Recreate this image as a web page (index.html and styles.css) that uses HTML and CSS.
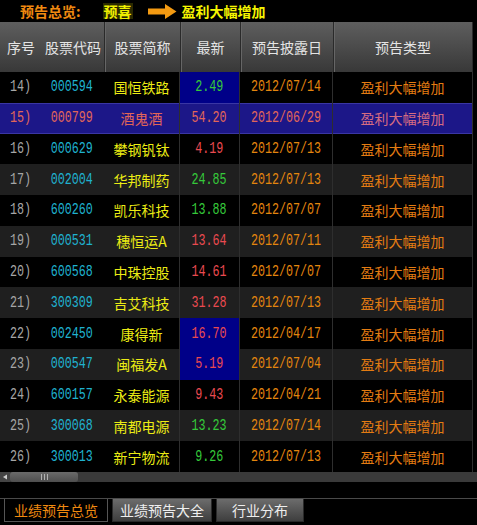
FILE: index.html
```html
<!DOCTYPE html>
<html lang="zh">
<head>
<meta charset="utf-8">
<link rel="stylesheet" href="styles.css">
</head>
<body>
<div class="app">
  <div class="titlebar">
    <span class="t-label">预告总览:</span>
    <span class="t-kind">预喜</span>
    <svg class="t-arrow" width="29" height="15" viewBox="0 0 29 15"><path d="M0 4.5 H17 V0 L28.5 7.5 L17 15 V10.5 H0 Z" fill="#f39a12"/></svg>
    <span class="t-type">盈利大幅增加</span>
  </div>

  <div class="grid">
    <div class="hrow">
      <div class="h h-seq">序号</div>
      <div class="h h-code">股票代码</div>
      <div class="h h-name sep">股票简称</div>
      <div class="h h-price sep">最新</div>
      <div class="h h-date sep">预告披露日</div>
      <div class="h h-type sep last">预告类型</div>
    </div>

    <div class="row">
      <div class="c c-seq"><span class="num">14)</span></div><div class="c c-code"><span class="num">000594</span></div><div class="c c-name">国恒铁路</div><div class="c c-price blue up"><span class="num">2.49</span></div><div class="c c-date"><span class="num">2012/07/14</span></div><div class="c c-type">盈利大幅增加</div>
    </div>
    <div class="row sel">
      <div class="c c-seq"><span class="num">15)</span></div><div class="c c-code"><span class="num">000799</span></div><div class="c c-name">酒鬼酒</div><div class="c c-price"><span class="num">54.20</span></div><div class="c c-date"><span class="num">2012/06/29</span></div><div class="c c-type">盈利大幅增加</div>
    </div>
    <div class="row">
      <div class="c c-seq"><span class="num">16)</span></div><div class="c c-code"><span class="num">000629</span></div><div class="c c-name">攀钢钒钛</div><div class="c c-price down"><span class="num">4.19</span></div><div class="c c-date"><span class="num">2012/07/13</span></div><div class="c c-type">盈利大幅增加</div>
    </div>
    <div class="row alt">
      <div class="c c-seq"><span class="num">17)</span></div><div class="c c-code"><span class="num">002004</span></div><div class="c c-name">华邦制药</div><div class="c c-price up"><span class="num">24.85</span></div><div class="c c-date"><span class="num">2012/07/13</span></div><div class="c c-type">盈利大幅增加</div>
    </div>
    <div class="row">
      <div class="c c-seq"><span class="num">18)</span></div><div class="c c-code"><span class="num">600260</span></div><div class="c c-name">凯乐科技</div><div class="c c-price up"><span class="num">13.88</span></div><div class="c c-date"><span class="num">2012/07/07</span></div><div class="c c-type">盈利大幅增加</div>
    </div>
    <div class="row alt">
      <div class="c c-seq"><span class="num">19)</span></div><div class="c c-code"><span class="num">000531</span></div><div class="c c-name">穗恒运A</div><div class="c c-price down"><span class="num">13.64</span></div><div class="c c-date"><span class="num">2012/07/11</span></div><div class="c c-type">盈利大幅增加</div>
    </div>
    <div class="row">
      <div class="c c-seq"><span class="num">20)</span></div><div class="c c-code"><span class="num">600568</span></div><div class="c c-name">中珠控股</div><div class="c c-price down"><span class="num">14.61</span></div><div class="c c-date"><span class="num">2012/07/07</span></div><div class="c c-type">盈利大幅增加</div>
    </div>
    <div class="row alt">
      <div class="c c-seq"><span class="num">21)</span></div><div class="c c-code"><span class="num">300309</span></div><div class="c c-name">吉艾科技</div><div class="c c-price down"><span class="num">31.28</span></div><div class="c c-date"><span class="num">2012/07/13</span></div><div class="c c-type">盈利大幅增加</div>
    </div>
    <div class="row">
      <div class="c c-seq"><span class="num">22)</span></div><div class="c c-code"><span class="num">002450</span></div><div class="c c-name">康得新</div><div class="c c-price blue down"><span class="num">16.70</span></div><div class="c c-date"><span class="num">2012/04/17</span></div><div class="c c-type">盈利大幅增加</div>
    </div>
    <div class="row alt">
      <div class="c c-seq"><span class="num">23)</span></div><div class="c c-code"><span class="num">000547</span></div><div class="c c-name">闽福发A</div><div class="c c-price blue down"><span class="num">5.19</span></div><div class="c c-date"><span class="num">2012/07/04</span></div><div class="c c-type">盈利大幅增加</div>
    </div>
    <div class="row">
      <div class="c c-seq"><span class="num">24)</span></div><div class="c c-code"><span class="num">600157</span></div><div class="c c-name">永泰能源</div><div class="c c-price down"><span class="num">9.43</span></div><div class="c c-date"><span class="num">2012/04/21</span></div><div class="c c-type">盈利大幅增加</div>
    </div>
    <div class="row alt">
      <div class="c c-seq"><span class="num">25)</span></div><div class="c c-code"><span class="num">300068</span></div><div class="c c-name">南都电源</div><div class="c c-price up"><span class="num">13.23</span></div><div class="c c-date"><span class="num">2012/07/14</span></div><div class="c c-type">盈利大幅增加</div>
    </div>
    <div class="row">
      <div class="c c-seq"><span class="num">26)</span></div><div class="c c-code"><span class="num">300013</span></div><div class="c c-name">新宁物流</div><div class="c c-price up"><span class="num">9.26</span></div><div class="c c-date"><span class="num">2012/07/13</span></div><div class="c c-type">盈利大幅增加</div>
    </div>
  </div>

  <div class="hscroll">
    <div class="sb-btn"><svg width="6" height="6" viewBox="0 0 6 6"><path d="M1 3 L5 0.5 V5.5 Z" fill="#cfcfcf"/></svg></div>
    <div class="sb-thumb"><span class="grip"></span><span class="grip"></span><span class="grip"></span></div>
  </div>

  <div class="spacer"></div>

  <div class="tabs">
    <div class="tab active">业绩预告总览</div>
    <div class="tab">业绩预告大全</div>
    <div class="tab">行业分布</div>
  </div>
</div>
</body>
</html>
```

FILE: styles.css
```css
* { box-sizing: border-box; }
html, body { margin: 0; padding: 0; background: #000; }
body {
  font-family: "Noto Sans CJK SC", "Noto Sans", sans-serif;
  width: 477px;
  height: 525px;
  overflow: hidden;
}
.app { width: 477px; display: flex; flex-direction: column; }

.titlebar {
  height: 22px;
  display: flex;
  align-items: center;
  padding-left: 20px;
  font-size: 14px;
  font-weight: bold;
  line-height: 16px;
}
.t-label { color: #f08a10; margin-right: 22px; }
.t-kind { color: #f0f000; background: #2a2a00; padding: 0 1px; margin-right: 15px; }
.t-arrow { margin-right: 5px; }
.t-type { color: #f5f500; }

.grid { width: 473px; display: flex; flex-direction: column; }

.hrow {
  height: 50px;
  display: grid;
  grid-template-columns: 40px 64px 76px 60px 93px 140px;
  background: linear-gradient(#5e5e5e, #383838);
  font-size: 14px;
}
.h { display: flex; align-items: center; justify-content: center; color: #e4e4e4; }
.h-seq { justify-content: flex-start; padding-left: 7px; }
.h-code { justify-content: flex-start; padding-left: 5px; }
.h.sep { border-left: 1px solid #2a2a2a; box-shadow: inset 1px 0 #666; }
.h.last { border-right: 1px solid #2a2a2a; }

.row {
  height: 30.77px;
  display: grid;
  grid-template-columns: 40px 64px 76px 60px 93px 140px;
  background: #000;
  font-size: 14px;
}
.row.alt { background: #1f1f1f; }
.row.sel { background: #1c1788; box-shadow: inset 0 1px #3a36a4, inset 0 -1px #3a36a4; }

.c { display: flex; align-items: center; justify-content: center; white-space: nowrap; }
.c-name, .c-price, .c-date, .c-type { border-right: 1px solid #2e2e2e; }

.num {
  display: inline-block;
  font-family: "Liberation Mono", monospace;
  font-size: 16px;
  transform: scaleX(0.73);
}

.c-seq { color: #a6a6a6; }
.c-code { color: #1fb2cf; }
.c-name { color: #ecec14; }
.c-date { color: #e4860e; }
.c-type { color: #e47c12; }
.up { color: #35c93a; }
.down { color: #ea4a50; }
.blue { background: #000088; }

.row.sel .c { color: #e26658; }
.row.sel .c-type { color: #d66c82; }

.hscroll {
  height: 10px;
  background: #3a3a3a;
  display: flex;
  align-items: stretch;
}
.sb-btn {
  width: 10px;
  display: flex;
  align-items: center;
  justify-content: center;
  background: #444;
}
.sb-thumb {
  width: 68px;
  background: linear-gradient(#6a6a6a, #4e4e4e);
  border-radius: 3px;
  display: flex;
  align-items: center;
  justify-content: center;
  gap: 2px;
}
.grip { width: 1px; height: 6px; background: #b0b0b0; }

.spacer { height: 17px; border-bottom: 1px solid #4a4a4a; }

.tabs {
  height: 24px;
  display: flex;
  gap: 4px;
  padding-left: 4px;
}
.tab {
  height: 23px;
  display: flex;
  align-items: center;
  justify-content: center;
  font-size: 14px;
  color: #eeeeee;
  background: linear-gradient(#6c6c6c, #3e3e3e);
  border: 1px solid #2a2a2a;
  border-top: 0;
  padding: 0 6px;
}
.tab:nth-child(1) { width: 104px; }
.tab:nth-child(2) { width: 100px; }
.tab:nth-child(3) { width: 88px; }
.tab.active {
  background: #000;
  color: #f08a10;
  border: 1px solid #555;
  border-top: 0;
}
```
